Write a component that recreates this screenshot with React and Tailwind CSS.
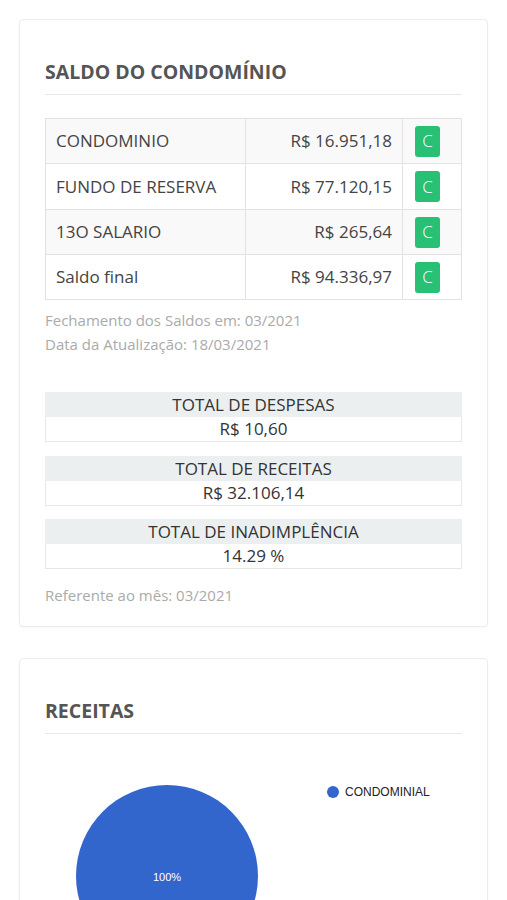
export default function App() {
  const rows = [
    ["CONDOMINIO", "R$ 16.951,18", "h-[45px]"],
    ["FUNDO DE RESERVA", "R$ 77.120,15", "h-[46px]"],
    ["13O SALARIO", "R$ 265,64", "h-[45px]"],
    ["Saldo final", "R$ 94.336,97", "h-[45px]"],
  ];
  const totals = [
    ["TOTAL DE DESPESAS", "R$ 10,60"],
    ["TOTAL DE RECEITAS", "R$ 32.106,14"],
    ["TOTAL DE INADIMPLÊNCIA", "14.29 %"],
  ];
  return (
    <div
      className="min-h-[900px] bg-white px-[19px] pt-[19px] text-[#333]"
      style={{ fontFamily: '"Open Sans", sans-serif' }}
    >
      <div className="rounded-[4px] border border-[#ececec] bg-white px-[25px] pt-[41px] pb-[19px] shadow-[0_1px_2px_rgba(0,0,0,0.03)]">
        <h2 className="border-b border-[#e8e8e8] pb-[11px] text-[19.5px] leading-[22px] font-bold text-[#555]">
          SALDO DO CONDOMÍNIO
        </h2>
        <table className="mt-[23px] w-full border-collapse border border-[#e2e2e2] text-[17px]">
          <tbody>
            {rows.map(([a, b, h], i) => (
              <tr key={a} className={i % 2 === 0 ? "bg-[#f9f9f9]" : "bg-white"}>
                <td className={`${h} w-[200px] border border-[#e2e2e2] pl-[10px] text-[#444]`}>{a}</td>
                <td className={`${h} border border-[#e2e2e2] pr-[10px] text-right text-[#444]`}>{b}</td>
                <td className={`${h} w-[59px] border border-[#e2e2e2] pl-[12px]`}>
                  <span className="flex h-[31px] w-[25px] items-center justify-center rounded-[3px] bg-[#27c075] text-[17px] font-light text-white">
                    C
                  </span>
                </td>
              </tr>
            ))}
          </tbody>
        </table>
        <div className="mt-[8px] text-[15px] leading-[24px] text-[#aaa]">
          <div>Fechamento dos Saldos em: 03/2021</div>
          <div>Data da Atualização: 18/03/2021</div>
        </div>
        <div className="mt-[36px] flex flex-col gap-[13.5px]">
          {totals.map(([a, b]) => (
            <div key={a} className="text-center text-[17px] leading-[25px] text-[#333]">
              <div className="bg-[#eceff0]">{a}</div>
              <div className="border border-t-0 border-[#e6e6e6] bg-white leading-[24px]">{b}</div>
            </div>
          ))}
        </div>
        <div className="mt-[14px] text-[15px] leading-[24px] text-[#aaa]">Referente ao mês: 03/2021</div>
      </div>

      <div className="mt-[31px] rounded-[4px] border border-[#ececec] bg-white px-[25px] pt-[41px] shadow-[0_1px_2px_rgba(0,0,0,0.03)]">
        <h2 className="border-b border-[#e8e8e8] pb-[11px] text-[19.5px] leading-[22px] font-bold text-[#555]">
          RECEITAS
        </h2>
        <svg width="418" height="240" className="block">
          <circle cx="122" cy="142" r="91" fill="#3366cc" />
          <text x="122" y="147" textAnchor="middle" fontFamily="Arial, 'Liberation Sans', sans-serif" fontSize="11" fill="#ffffff">
            100%
          </text>
          <circle cx="288" cy="58" r="6" fill="#3366cc" />
          <text x="300" y="62" fontFamily="Arial, 'Liberation Sans', sans-serif" fontSize="12" fill="#222222">
            CONDOMINIAL
          </text>
        </svg>
      </div>
    </div>
  );
}
